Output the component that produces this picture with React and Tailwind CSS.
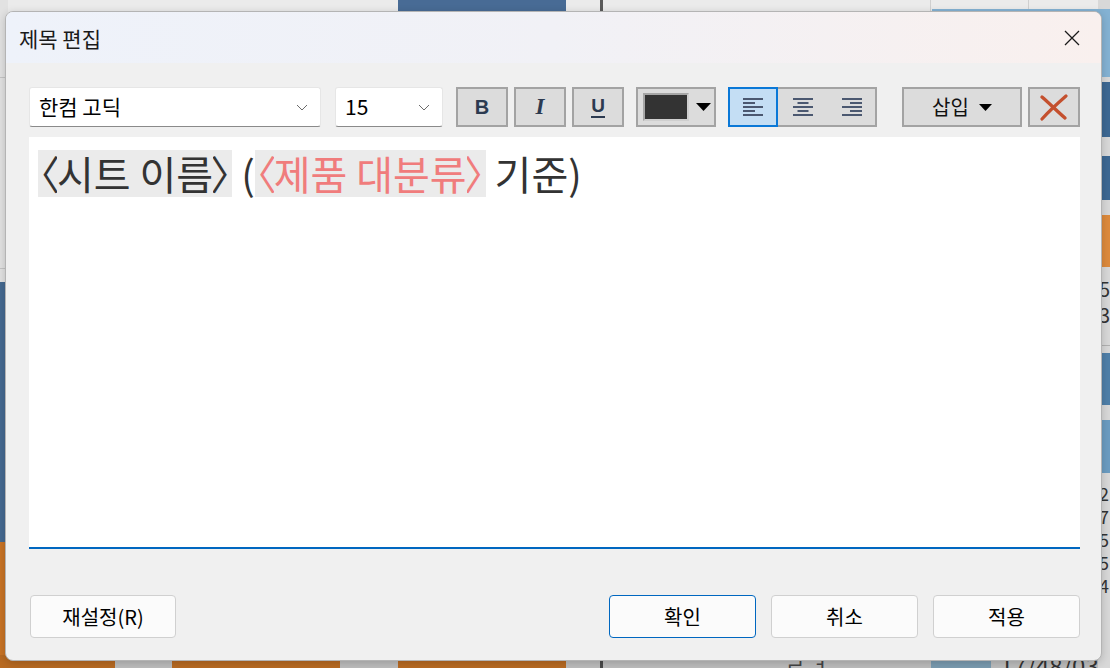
import React from "react";

const KR = { fontFamily: '"Noto Sans CJK KR", "Noto Sans", sans-serif' };

function Chevron() {
    return (
        <svg width="12" height="7" viewBox="0 0 12 7" className="shrink-0">
            <polyline points="1,1 6,6 11,1" fill="none" stroke="#6b6b6b" strokeWidth="1" />
        </svg>
    );
}

function AlignIcon({ mode }) {
    const rows = [0, 4, 8, 12, 16];
    return (
        <svg width="20" height="18" viewBox="0 0 20 18">
            {rows.map((y, i) => {
                const w = i % 2 === 0 ? 20 : mode === "center" ? 11 : 12;
                const x = mode === "left" ? 0 : mode === "right" ? 20 - w : (20 - w) / 2;
                return <rect key={y} x={x} y={y} width={w} height="2" fill="#4b5870" />;
            })}
        </svg>
    );
}

function ToolButton({ children, className = "" }) {
    return (
        <div className={`flex items-center justify-center h-[40px] border-2 border-[#a3a3a3] bg-[#dcdcdc] ${className}`}>
            {children}
        </div>
    );
}

// full-width CJK angle brackets trimmed to a narrow box, as in the reference
function Open() {
    return (
        <span className="inline-block w-[19px] overflow-hidden align-top">
            <span className="inline-block -ml-[18px]">〈</span>
        </span>
    );
}
function Close() {
    return (
        <span className="inline-block w-[19px] overflow-hidden align-top">
            <span className="inline-block -ml-[3px]">〉</span>
        </span>
    );
}

function Field({ children, className = "" }) {
    return (
        <span className={`inline-block h-[47px] bg-[#ebebeb] align-top ${className}`}>
            <Open />
            {children}
            <Close />
        </span>
    );
}

function Backdrop() {
    return (
        <>
            {/* top strip */}
            <div className="absolute left-[398px] top-0 w-[168px] h-[14px] bg-[#486b95]" />
            <div className="absolute left-[600px] top-0 w-[3px] h-[14px] bg-[#5a5a5a]" />
            <div className="absolute left-[930px] top-0 w-px h-[14px] bg-[#cfcfcf]" />
            <div className="absolute left-[1028px] top-0 w-px h-[9px] bg-[#cfcfcf]" />
            <div className="absolute left-[932px] top-[9px] w-[178px] h-[68px] bg-[#84b2d3]" />
            {/* left strip */}
            <div className="absolute left-0 top-[77px] w-[8px] h-px bg-[#c4c4c4]" />
            <div className="absolute left-0 top-[268px] w-[8px] h-px bg-[#c4c4c4]" />
            <div className="absolute left-0 top-[282px] w-[8px] h-[260px] bg-[#456990]" />
            <div className="absolute left-0 top-[542px] w-[8px] h-[126px] bg-[#c87325]" />
            {/* right strip */}
            <div className="absolute left-[1098px] top-[82px] w-[12px] h-[55px] bg-[#3d6893]" />
            <div className="absolute left-[1098px] top-[156px] w-[12px] h-[44px] bg-[#3d6893]" />
            <div className="absolute left-[1098px] top-[215px] w-[12px] h-[52px] bg-[#dd8a3c]" />
            <div className="absolute left-[1098px] top-[345px] w-[12px] h-px bg-[#b0b0b0]" />
            <div className="absolute left-[1098px] top-[353px] w-[12px] h-[52px] bg-[#4f7fa8]" />
            <div className="absolute left-[1098px] top-[420px] w-[12px] h-[53px] bg-[#6b9cc1]" />
            <div className="absolute left-[1099px] top-[276px] text-[20px] leading-[26px] text-[#333]" style={KR}>
                5<br />3
            </div>
            <div className="absolute left-[1099px] top-[482px] text-[18px] leading-[23px] text-[#333]" style={KR}>
                2<br />7<br />5<br />5<br />4
            </div>
            {/* bottom strip */}
            <div className="absolute left-0 top-[655px] w-[115px] h-[13px] bg-[#b86a22]" />
            <div className="absolute left-[172px] top-[655px] w-[168px] h-[13px] bg-[#b86a22]" />
            <div className="absolute left-[398px] top-[655px] w-[168px] h-[13px] bg-[#b86a22]" />
            <div className="absolute left-[600px] top-[655px] w-[3px] h-[13px] bg-[#4a4a4a]" />
            <div className="absolute left-[931px] top-[655px] w-[60px] h-[13px] bg-[#7a9bb0]" />
            <div className="absolute left-[785px] top-[650px] text-[22px] leading-[26px] text-[#444]" style={KR}>
                ㄹ ㅓ
            </div>
            <div className="absolute left-[1000px] top-[652px] text-[24px] leading-[26px] text-[#333]" style={KR}>
                17/48/03
            </div>
        </>
    );
}

export default function App() {
    return (
        <div className="relative w-[1110px] h-[668px] overflow-hidden bg-[#bdbdbd]" style={KR}>
            <div className="absolute inset-x-0 top-0 h-[14px] bg-[#ebebeb]" />
            <div className="absolute left-0 top-0 w-[8px] h-[282px] bg-[#e2e2e2]" />
            <div className="absolute left-[1098px] top-0 w-[12px] h-[668px] bg-[#d8d8d8]" />
            <Backdrop />

            {/* Dialog */}
            <div className="absolute left-[5px] top-[11px] w-[1097px] h-[650px] flex flex-col rounded-[8px] border border-[#b4b4b4] bg-[#f0f0f0] overflow-hidden shadow-[0_2px_8px_rgba(0,0,0,0.18)]">
                {/* Title bar */}
                <div className="flex items-center justify-between h-[51px] pl-[13px] pr-[21px] bg-gradient-to-r from-[#eef2fa] via-[#f1f1f6] to-[#f9f0ee]">
                    <span className="text-[21px] text-[#1a1a1a] leading-none pt-[2px]">제목 편집</span>
                    <svg width="16" height="16" viewBox="0 0 16 16">
                        <path d="M1 1 L15 15 M15 1 L1 15" stroke="#1a1a1a" strokeWidth="1.3" />
                    </svg>
                </div>

                <div className="flex flex-col pl-[23px] pr-[21px]">
                    {/* Toolbar */}
                    <div className="flex items-center mt-[24px] h-[40px]">
                        <div className="flex items-center justify-between w-[292px] h-[40px] pl-[9px] pr-[12px] bg-white border border-[#e6e6e6] border-b-[#8a8a8a] rounded-[3px]">
                            <span className="text-[21px] text-black">한컴 고딕</span>
                            <Chevron />
                        </div>
                        <div className="flex items-center justify-between w-[108px] h-[40px] ml-[14px] pl-[9px] pr-[12px] bg-white border border-[#e6e6e6] border-b-[#8a8a8a] rounded-[3px]">
                            <span className="text-[21px] text-black">15</span>
                            <Chevron />
                        </div>

                        <ToolButton className="w-[52px] ml-[13px]">
                            <span className="text-[20px] font-bold text-[#2c3a50]" style={{ fontFamily: '"Liberation Sans", sans-serif' }}>B</span>
                        </ToolButton>
                        <ToolButton className="w-[52px] ml-[6px]">
                            <span className="text-[23px] font-bold italic text-[#2c3a50]" style={{ fontFamily: '"Liberation Serif", serif' }}>I</span>
                        </ToolButton>
                        <ToolButton className="w-[52px] ml-[6px]">
                            <span className="text-[19px] font-bold text-[#2c3a50] border-b-2 border-[#2c3a50] leading-[20px]" style={{ fontFamily: '"Liberation Sans", sans-serif' }}>U</span>
                        </ToolButton>

                        <ToolButton className="w-[80px] ml-[12px] justify-start pl-[5px] gap-[7px]">
                            <div className="w-[46px] h-[28px] bg-[#333333] border-2 border-[#a6a6a6] border-b-[#cfcfcf] border-r-[#cfcfcf]" />
                            <svg width="15" height="8" viewBox="0 0 15 8">
                                <polygon points="0,0 15,0 7.5,8" fill="#000" />
                            </svg>
                        </ToolButton>

                        <div className="flex h-[40px] ml-[12px]">
                            <div className="flex items-center justify-center w-[50px] h-[40px] border-2 border-[#0a78d7] bg-[#c4def4]">
                                <AlignIcon mode="left" />
                            </div>
                            <div className="flex h-[40px] border-2 border-l-0 border-[#a3a3a3] bg-[#dcdcdc]">
                                <div className="flex items-center justify-center w-[50px]">
                                    <AlignIcon mode="center" />
                                </div>
                                <div className="flex items-center justify-center w-[47px]">
                                    <AlignIcon mode="right" />
                                </div>
                            </div>
                        </div>

                        <ToolButton className="w-[120px] ml-[25px] gap-[10px]">
                            <span className="text-[20px] text-[#111]">삽입</span>
                            <svg width="13" height="7" viewBox="0 0 13 7">
                                <polygon points="0,0 13,0 6.5,7" fill="#000" />
                            </svg>
                        </ToolButton>
                        <ToolButton className="w-[52px] ml-[6px]">
                            <svg width="30" height="27" viewBox="0 0 30 27">
                                <path d="M3 3 C10 9 18 17 26 24" stroke="#c4502e" strokeWidth="3.4" strokeLinecap="round" fill="none" />
                                <path d="M27 2 C19 9 11 16 3 25" stroke="#c4502e" strokeWidth="3.2" strokeLinecap="round" fill="none" />
                            </svg>
                        </ToolButton>
                    </div>

                    {/* Editor */}
                    <div className="mt-[10px] h-[412px] bg-white border-b-2 border-[#0067c0] pl-[9px] pt-[13px]">
                        <p className="text-[40px] leading-[47px] text-[#333333] whitespace-nowrap">
                            <Field>시트 이름</Field> (<Field className="text-[#f07c7c]">제품 대분류</Field> 기준)
                        </p>
                    </div>

                    {/* Buttons */}
                    <div className="flex items-center mt-[46px]">
                        <button className="w-[146px] h-[43px] ml-px rounded-[4px] border border-[#d0d0d0] bg-[#fbfbfb] text-[20px] text-black">
                            재설정(R)
                        </button>
                        <div className="flex-1" />
                        <button className="w-[147px] h-[43px] rounded-[4px] border border-[#0067c0] bg-[#fbfbfb] text-[20px] text-black">
                            확인
                        </button>
                        <button className="w-[147px] h-[43px] ml-[15px] rounded-[4px] border border-[#d0d0d0] bg-[#fbfbfb] text-[20px] text-black">
                            취소
                        </button>
                        <button className="w-[147px] h-[43px] ml-[15px] rounded-[4px] border border-[#d0d0d0] bg-[#fbfbfb] text-[20px] text-black">
                            적용
                        </button>
                    </div>
                </div>
            </div>
        </div>
    );
}
